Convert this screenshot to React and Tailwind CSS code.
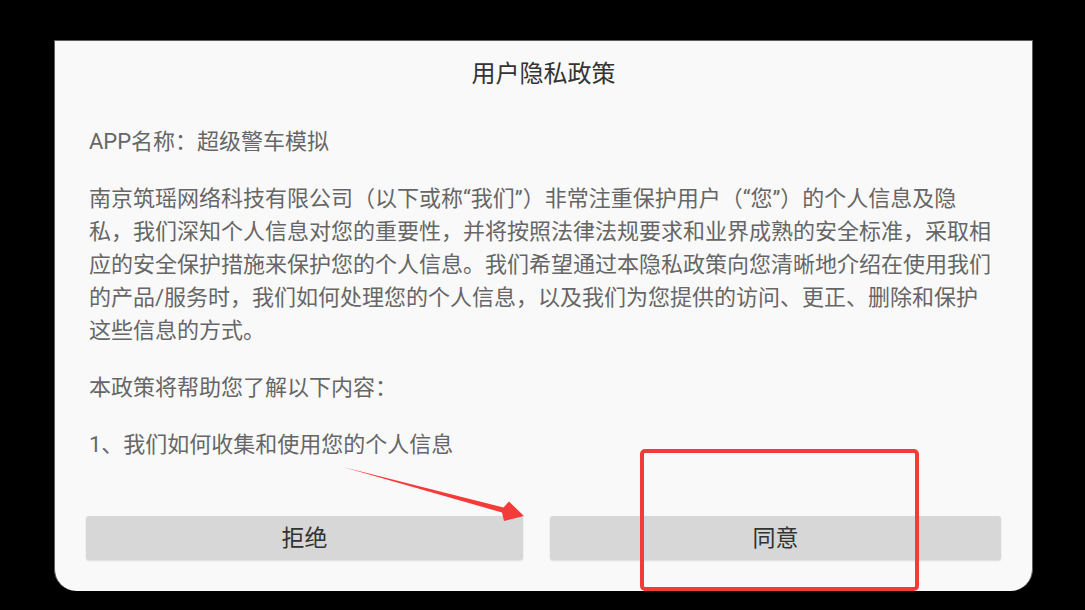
import React from "react";

const Arrow = () => (
  <svg className="absolute left-0 top-0 pointer-events-none" width="1085" height="610" viewBox="0 0 1085 610">
    <polygon points="343,467 503.5,507.5 509,501.5 524,516 504,521 502,512.5" fill="#f33c3a" />
  </svg>
);

export default function App() {
  return (
    <div className="relative w-[1085px] h-[610px] bg-black overflow-hidden font-['Roboto','Noto_Sans_CJK_SC',sans-serif]">
      <div className="relative ml-[54px] mt-[40px] w-[979px] h-[551px] bg-[#f9f9f9] border border-b-0 border-[#5f5f5f] rounded-b-[22px] flex flex-col">
        {/* Title */}
        <h1 className="pt-[17px] text-center text-[24px] leading-[32px] text-[#333]">用户隐私政策</h1>

        {/* Body */}
        <div className="mt-[35px] pl-[34px] w-[940px] text-[22px] leading-[33px] text-[#666] flex flex-col gap-[24px]">
          <p>APP名称：超级警车模拟</p>
          <p>
            南京筑瑶网络科技有限公司（以下或称“我们”）非常注重保护用户（“您”）的个人信息及隐私，我们深知个人信息对您的重要性，并将按照法律法规要求和业界成熟的安全标准，采取相应的安全保护措施来保护您的个人信息。我们希望通过本隐私政策向您清晰地介绍在使用我们的产品/服务时，我们如何处理您的个人信息，以及我们为您提供的访问、更正、删除和保护这些信息的方式。
          </p>
          <p>本政策将帮助您了解以下内容：</p>
          <p>1、我们如何收集和使用您的个人信息</p>
        </div>

        {/* Buttons */}
        <div className="mt-auto mb-[31px] px-[31px] flex gap-[27px]">
          <button className="w-[437px] h-[44px] pt-[3px] rounded-[3px] bg-[#d6d7d6] shadow-[0_1px_2px_rgba(0,0,0,0.12)] text-[23px] text-[#333]">
            拒绝
          </button>
          <button className="flex-1 h-[44px] pt-[3px] rounded-[3px] bg-[#d6d7d6] shadow-[0_1px_2px_rgba(0,0,0,0.12)] text-[23px] text-[#333]">
            同意
          </button>
        </div>
      </div>

      {/* Annotations */}
      <div className="absolute left-[640px] top-[449px] w-[279px] h-[142px] border-[4px] border-[#f33c3a] rounded-[5px] pointer-events-none" />
      <Arrow />
    </div>
  );
}
